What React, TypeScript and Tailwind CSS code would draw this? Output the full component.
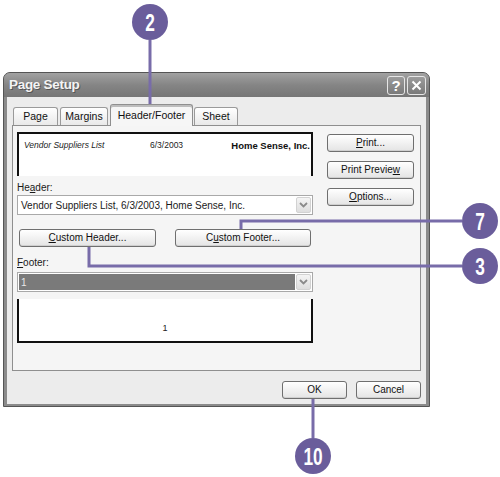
import React from "react";

const FONT = "font-['Liberation_Sans',Arial,sans-serif]";

function U({ children }: { children: React.ReactNode }) {
  return <span className="underline underline-offset-[1px]">{children}</span>;
}

function Button({ children, className = "" }: { children: React.ReactNode; className?: string }) {
  return (
    <div
      className={`flex h-[18px] items-center justify-center rounded-[3px] border border-[#6f6f6f] bg-gradient-to-b from-white to-[#e4e4e4] text-[10px] leading-none text-[#111] shadow-[inset_0_-1px_0_#cfcfcf] ${className}`}
    >
      {children}
    </div>
  );
}

function Chevron() {
  return (
    <svg width="9" height="6" viewBox="0 0 9 6">
      <path d="M1 1 L4.5 4.5 L8 1" fill="none" stroke="#8a8a8a" strokeWidth="1.8" />
    </svg>
  );
}

function Combo({ selected, children }: { selected?: boolean; children: React.ReactNode }) {
  return (
    <div className="flex h-[20px] items-stretch border border-[#a9a9a9] bg-white p-[1px]">
      {selected ? (
        <div className="mr-[1px] flex flex-1 items-center bg-[#7a7a7a] pl-[2px] text-[10px] text-[#e8e8e8]">
          {children}
        </div>
      ) : (
        <div className="flex flex-1 items-center pl-[2px] text-[10px] text-[#1a1a1a]">{children}</div>
      )}
      <div className="flex w-[15px] items-center justify-center rounded-[2px] border border-[#d2d2d2] bg-gradient-to-b from-[#f4f4f4] to-[#dedede]">
        <Chevron />
      </div>
    </div>
  );
}

function Tab({ label, active, className = "" }: { label: string; active?: boolean; className?: string }) {
  if (active) {
    return (
      <div
        className={`relative z-10 -mb-[1px] flex h-[22px] items-center justify-center rounded-t-[3px] border border-b-0 border-[#8f8f8f] bg-[#f6f6f6] text-[10.5px] text-[#111] shadow-[inset_0_2px_0_#bdbdbd] ${className}`}
      >
        {label}
      </div>
    );
  }
  return (
    <div
      className={`flex h-[18px] items-center justify-center rounded-t-[3px] border border-b-0 border-[#9a9a9a] bg-gradient-to-b from-white to-[#e9e9e9] text-[10.5px] text-[#111] ${className}`}
    >
      {label}
    </div>
  );
}

function Dialog() {
  return (
    <div className="w-[427px] rounded-t-[7px] border border-[#555] bg-[#8b8b8b] px-[3px] pb-[2px]">
      {/* title bar */}
      <div className="-mx-[3px] flex h-[24px] items-center justify-between rounded-t-[6px] bg-gradient-to-b from-[#a2a2a2] via-[#858585] to-[#767676] pl-[5px] pr-[3px]">
        <span className="text-[13.5px] font-bold tracking-[-0.3px] text-[#f4f4f4] [text-shadow:1px_1px_0_#555]">
          Page Setup
        </span>
        <div className="flex gap-[2px]">
          <div className="flex h-[19px] w-[18px] items-center justify-center rounded-[3px] border border-[#e6e6e6] bg-gradient-to-b from-[#9c9c9c] to-[#7a7a7a] text-[15px] font-bold leading-none text-white">
            ?
          </div>
          <div className="flex h-[19px] w-[19px] items-center justify-center rounded-[3px] border border-[#e6e6e6] bg-gradient-to-b from-[#9c9c9c] to-[#7a7a7a]">
            <svg width="11" height="11" viewBox="0 0 11 11">
              <path d="M1.5 1.5 L9.5 9.5 M9.5 1.5 L1.5 9.5" stroke="white" strokeWidth="2" />
            </svg>
          </div>
        </div>
      </div>

      {/* body */}
      <div className="bg-[#ececec] px-[5px] pb-[5px] pt-[7px]">
        <div className="flex h-[21px] items-end">
          <Tab label="Page" className="ml-[1px] w-[45px]" />
          <Tab label="Margins" className="ml-[2px] w-[48px]" />
          <Tab label="Header/Footer" active className="ml-[2px] w-[83px]" />
          <Tab label="Sheet" className="ml-[1px] w-[44px]" />
        </div>

        <div className="flex h-[246px] border border-[#8f8f8f] bg-[#f5f5f5] pl-[4px] pt-[6px]">
          <div className="flex w-[296px] flex-col">
            {/* header preview */}
            <div className="flex h-[44px] items-start border-x-2 border-t-2 border-[#111] bg-white pl-[5px] pr-[1px] pt-[5px]">
              <span className="w-[126px] text-[8.5px] italic text-[#222]">Vendor Suppliers List</span>
              <span className="text-[8.5px] text-[#222]">6/3/2003</span>
              <span className="ml-auto text-[9.5px] font-bold text-[#111]">Home Sense, Inc.</span>
            </div>

            <div className="mt-[6px] h-[12px] text-[10px] leading-[12px] text-[#1a1a1a]">
              He<U>a</U>der:
            </div>
            <div className="mt-[1px]">
              <Combo>Vendor Suppliers List, 6/3/2003, Home Sense, Inc.</Combo>
            </div>

            <div className="mt-[14px] flex">
              <Button className="ml-[2px] w-[137px]">
                <U>C</U>ustom Header...
              </Button>
              <Button className="ml-[19px] w-[136px]">
                C<U>u</U>stom Footer...
              </Button>
            </div>

            <div className="mt-[10px] h-[12px] text-[10px] leading-[12px] text-[#1a1a1a]">
              <U>F</U>ooter:
            </div>
            <div className="mt-[3px]">
              <Combo selected>1</Combo>
            </div>

            {/* footer preview */}
            <div className="mt-[7px] flex h-[44px] items-end justify-center border-x-2 border-b-2 border-[#111] bg-white pb-[6px]">
              <span className="text-[9px] text-[#222]">1</span>
            </div>
          </div>

          <div className="ml-[14px] mt-[2px] flex w-[87px] flex-col gap-[9px]">
            <Button>
              <U>P</U>rint...
            </Button>
            <Button>
              Print Previe<U>w</U>
            </Button>
            <Button>
              <U>O</U>ptions...
            </Button>
          </div>
        </div>

        <div className="mt-[10px] flex justify-end gap-[9px]">
          <Button className="w-[65px]">OK</Button>
          <Button className="w-[65px]">Cancel</Button>
        </div>
      </div>
    </div>
  );
}

function Callouts() {
  const fill = "#6a5d9b";
  const line = "#786ca9";
  const badges = [
    { n: "2", x: 150, y: 22 },
    { n: "7", x: 480, y: 221 },
    { n: "3", x: 480, y: 266 },
    { n: "10", x: 313, y: 456 },
  ];
  return (
    <svg className="pointer-events-none absolute inset-0" width="500" height="477" viewBox="0 0 500 477">
      <g stroke={line} strokeWidth="3" fill="none">
        <path d="M150 40 V108" />
        <path d="M241 229 V221 H462" />
        <path d="M89 247 V266 H462" />
        <path d="M313 399 V438" />
      </g>
      {badges.map((b) => (
        <g key={b.n}>
          <circle cx={b.x} cy={b.y} r="18" fill={fill} />
          <g transform={`translate(${b.x} ${b.y + 8.5}) scale(0.72 1)`}>
            <text
              x="0"
              y="0"
              textAnchor="middle"
              fill="white"
              fontSize="24"
              fontWeight="bold"
              fontFamily="'Liberation Sans',Arial,sans-serif"
            >
              {b.n}
            </text>
          </g>
        </g>
      ))}
    </svg>
  );
}

export default function App() {
  return (
    <div className={`relative h-[477px] w-[500px] overflow-hidden bg-white ${FONT}`}>
      <div className="pl-[3px] pt-[72px]">
        <Dialog />
      </div>
      <Callouts />
    </div>
  );
}
